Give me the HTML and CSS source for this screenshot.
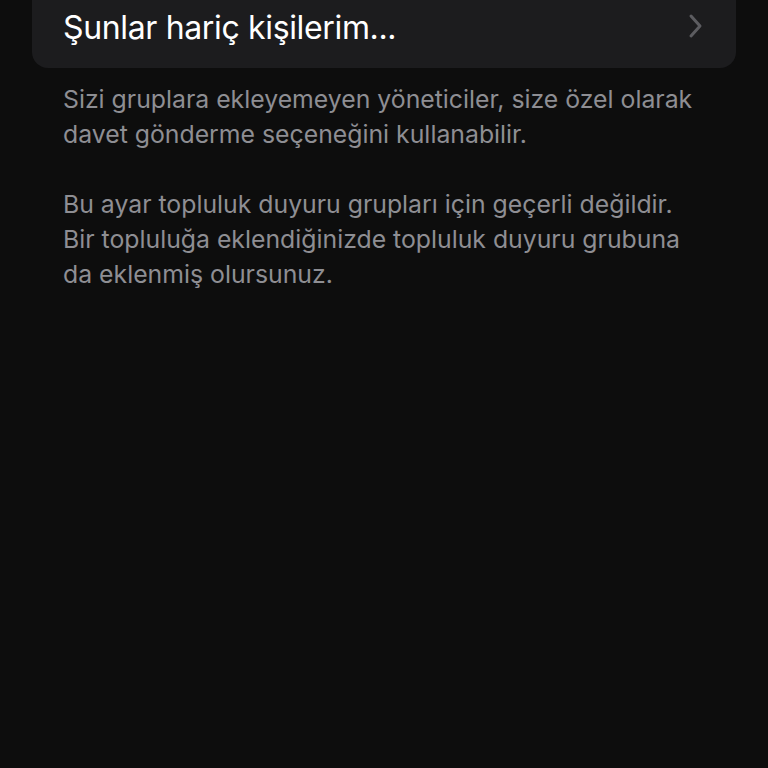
FILE: index.html
```html
<!DOCTYPE html>
<html lang="tr">
<head>
  <meta charset="UTF-8" />
  <title>Gruplar</title>
  <link rel="stylesheet" href="styles.css">
</head>
<body>

  <div class="card">
    <div class="row">
      <span class="row-label">Şunlar hariç kişilerim...</span>
      <svg class="chevron" width="16" height="26" viewBox="0 0 16 26">
        <path d="M3 3 L12 13 L3 23" fill="none" stroke="#5c5c60" stroke-width="3" stroke-linecap="round" stroke-linejoin="round" />
      </svg>
    </div>
  </div>

  <div class="footer-note">
    <p>Sizi gruplara ekleyemeyen yöneticiler, size özel olarak davet gönderme seçeneğini kullanabilir.</p>
    <p>Bu ayar topluluk duyuru grupları için geçerli değildir. Bir topluluğa eklendiğinizde topluluk duyuru grubuna da eklenmiş olursunuz.</p>
  </div>

</body>
</html>
```

FILE: styles.css
```css
body {
  margin: 0;
  padding: 0 32px;
  background: #0d0d0d;
  font-family: Inter, "Liberation Sans", sans-serif;
  height: 768px;
  overflow: hidden;
}

.card {
  background: #1c1c1e;
  border-radius: 0 0 16px 16px;
  padding: 0 32px 14px 31px;
}

.row {
  display: flex;
  align-items: center;
  justify-content: space-between;
  height: 54px;
}

.row-label {
  color: #ffffff;
  font-size: 32px;
  letter-spacing: -0.35px;
}

.chevron {
  margin-top: -3px;
}

.footer-note {
  padding: 14px 36px 0 31px;
  color: #8e8e93;
  font-size: 24.8px;
  line-height: 35px;
}

.footer-note p {
  margin: 0 0 35px;
}
```
